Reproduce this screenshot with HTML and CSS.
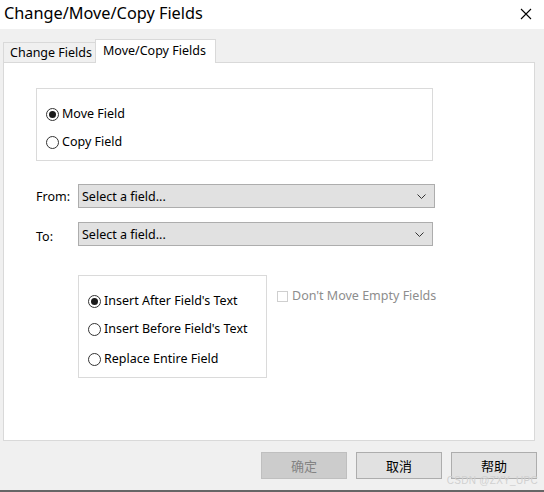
FILE: index.html
```html
<!DOCTYPE html>
<html>
<head>
<meta charset="utf-8">
<link rel="stylesheet" href="styles.css">
</head>
<body>
<div class="window">
  <div class="titlebar">
    <span class="title">Change/Move/Copy Fields</span>
    <svg class="close" width="12" height="12" viewBox="0 0 12 12"><path d="M1 1L11 11M11 1L1 11" stroke="#000" stroke-width="1.1" fill="none"/></svg>
  </div>
  <div class="main">
    <div class="tabs">
      <div class="tab">Change Fields</div>
      <div class="tab active">Move/Copy Fields</div>
    </div>
    <div class="panel">
      <div class="group group1">
        <div class="radio-row"><span class="radio checked"></span>Move Field</div>
        <div class="radio-row"><span class="radio"></span>Copy Field</div>
      </div>
      <div class="field-row from">
        <span class="label">From:</span>
        <div class="select wide"><span>Select a field...</span><svg class="chev" width="9" height="5" viewBox="0 0 9 5"><path d="M0.5 0.5L4.5 4.5L8.5 0.5" stroke="#333" fill="none"/></svg></div>
      </div>
      <div class="field-row to">
        <span class="label">To:</span>
        <div class="select"><span>Select a field...</span><svg class="chev" width="9" height="5" viewBox="0 0 9 5"><path d="M0.5 0.5L4.5 4.5L8.5 0.5" stroke="#333" fill="none"/></svg></div>
      </div>
      <div class="bottom-row">
        <div class="group group2">
          <div class="radio-row"><span class="radio checked"></span>Insert After Field's Text</div>
          <div class="radio-row"><span class="radio"></span>Insert Before Field's Text</div>
          <div class="radio-row"><span class="radio"></span>Replace Entire Field</div>
        </div>
        <div class="check-row"><span class="checkbox"></span>Don't Move Empty Fields</div>
      </div>
    </div>
    <div class="footer">
      <div class="btn disabled">确定</div>
      <div class="btn">取消</div>
      <div class="btn">帮助</div>
    </div>
  </div>
  <div class="watermark">CSDN @ZXY_UPC</div>
</div>
</body>
</html>
```
FILE: styles.css
```css
* { box-sizing: border-box; }
html, body { margin: 0; padding: 0; }
body {
  width: 544px;
  height: 492px;
  overflow: hidden;
  font-family: "Noto Sans", "Noto Sans CJK SC", sans-serif;
  font-size: 12.5px;
  color: #000;
  background: #f0f0f0;
}
.window {
  position: relative;
  width: 544px;
  height: 492px;
  border-bottom: 2px solid #666;
}
.titlebar {
  height: 29px;
  background: #fff;
  display: flex;
  align-items: center;
  justify-content: space-between;
  padding: 0 12px 0 4px;
}
.title {
  font-size: 16.3px;
  line-height: 29px;
  margin-top: -2px;
}
.close { margin-top: -2px; }
.main {
  background: #f0f0f0;
  height: 461px;
  padding-top: 10px;
}
.tabs {
  display: flex;
  align-items: flex-end;
  padding-left: 3px;
  height: 23px;
  position: relative;
  z-index: 1;
}
.tab {
  height: 20px;
  border: 1px solid #d9d9d9;
  border-bottom: none;
  border-right: none;
  line-height: 19px;
  width: 92px;
  white-space: nowrap;
  padding-left: 6px;
}
.tab.active {
  height: 24px;
  margin-bottom: -1px;
  background: #fff;
  border-right: 1px solid #d9d9d9;
  width: 121px;
  padding-left: 7px;
  line-height: 21px;
}
.panel {
  margin-left: 3px;
  width: 532px;
  height: 379px;
  background: #fff;
  border: 1px solid #d9d9d9;
  padding: 25px 0 0 32px;
}
.group {
  border: 1px solid #dadada;
}
.group1 {
  width: 397px;
  height: 73px;
  padding: 17px 0 0 9px;
}
.radio-row {
  display: flex;
  align-items: center;
  height: 16px;
  line-height: 16px;
  margin-bottom: 12px;
  white-space: nowrap;
}
.radio {
  width: 13px;
  height: 13px;
  border: 1px solid #333;
  border-radius: 50%;
  margin-right: 3px;
  display: flex;
  align-items: center;
  justify-content: center;
  background: #fff;
  flex: none;
}
.radio.checked::after {
  content: "";
  width: 7px;
  height: 7px;
  border-radius: 50%;
  background: #1a1a1a;
}
.field-row {
  display: flex;
  align-items: center;
}
.field-row.from { margin-top: 23px; }
.field-row.to { margin-top: 14px; }
.label {
  width: 42px;
  flex: none;
}
.field-row.to .label { padding-top: 4px; }
.select {
  width: 355px;
  height: 24px;
  background: #e1e1e1;
  border: 1px solid #adadad;
  display: flex;
  align-items: center;
  justify-content: space-between;
  padding: 0 8px 0 3px;
}
.select.wide { width: 357px; }
.chev { margin-top: 1px; }
.bottom-row {
  display: flex;
  align-items: flex-start;
  margin-top: 29px;
  margin-left: 42px;
}
.group2 {
  width: 189px;
  height: 103px;
  padding: 17px 0 0 9px;
}
.group2 .radio-row { margin-bottom: 12px; }
.group2 .radio-row:nth-child(2) { margin-bottom: 14px; }
.check-row {
  display: flex;
  align-items: center;
  margin-left: 10px;
  margin-top: 14px;
  color: #8d8d8d;
  line-height: 14px;
  white-space: nowrap;
}
.checkbox {
  width: 11px;
  height: 11px;
  border: 1px solid #cfcfcf;
  margin-right: 4px;
  background: #fff;
}
.footer {
  display: flex;
  justify-content: flex-end;
  gap: 9px;
  padding: 11px 7px 0 0;
}
.btn {
  width: 86px;
  height: 27px;
  border: 1px solid #adadad;
  background: #e1e1e1;
  display: flex;
  align-items: center;
  justify-content: center;
  font-family: "Noto Sans CJK SC", sans-serif;
  font-size: 13px;
  line-height: 16px;
}
.btn.disabled {
  background: #cccccc;
  border-color: #bfbfbf;
  color: #838383;
}
.watermark {
  position: absolute;
  right: 6px;
  bottom: 4px;
  font-family: "Liberation Sans", sans-serif;
  font-size: 10px;
  line-height: 10px;
  color: #d0d0d0;
  letter-spacing: 0.3px;
}
```
